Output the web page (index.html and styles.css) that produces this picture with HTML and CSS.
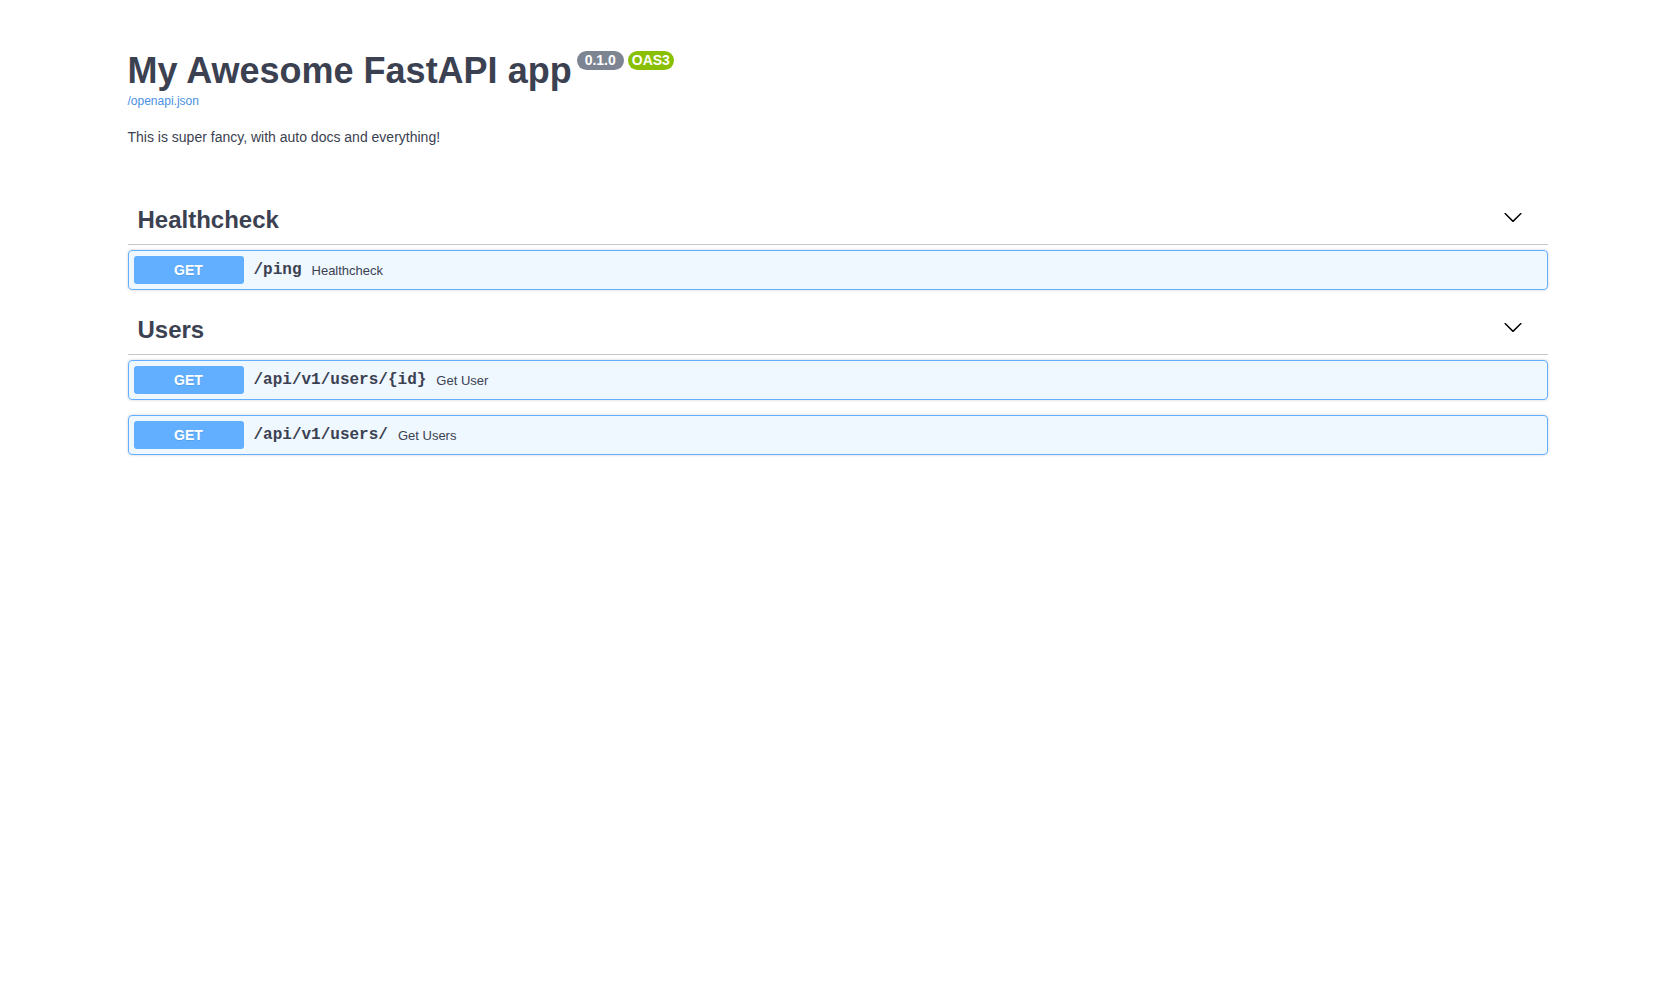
FILE: index.html
```html
<!DOCTYPE html>
<html lang="en">
<head>
<meta charset="utf-8">
<title>My Awesome FastAPI app - Swagger UI</title>
<link rel="stylesheet" href="styles.css">
</head>
<body>
<div class="swagger-ui">
  <div class="wrapper">
    <section class="info">
      <hgroup class="main">
        <h2 class="title">
          <span class="title-text">My Awesome FastAPI app</span>
          <span class="badge version">0.1.0</span>
          <span class="badge stamp">OAS3</span>
        </h2>
        <a class="link" href="#">/openapi.json</a>
      </hgroup>
      <div class="description">
        <p>This is super fancy, with auto docs and everything!</p>
      </div>
    </section>

    <section class="tag-section">
      <h3 class="opblock-tag">
        <span class="tag-name">Healthcheck</span>
        <button class="expand" type="button" aria-label="Collapse">
          <svg class="arrow" width="20" height="20" viewBox="0 0 20 20"><path d="M17.418 6.109c.272-.268.709-.268.979 0s.271.701 0 .969l-7.908 7.83c-.27.268-.707.268-.979 0l-7.908-7.83c-.27-.268-.27-.701 0-.969.271-.268.709-.268.979 0L10 13.25l7.418-7.141z"/></svg>
        </button>
      </h3>
      <div class="ops">
        <div class="opblock">
          <div class="summary">
            <span class="method">GET</span>
            <span class="path">/ping</span>
            <span class="desc">Healthcheck</span>
          </div>
        </div>
      </div>
    </section>

    <section class="tag-section">
      <h3 class="opblock-tag">
        <span class="tag-name">Users</span>
        <button class="expand" type="button" aria-label="Collapse">
          <svg class="arrow" width="20" height="20" viewBox="0 0 20 20"><path d="M17.418 6.109c.272-.268.709-.268.979 0s.271.701 0 .969l-7.908 7.83c-.27.268-.707.268-.979 0l-7.908-7.830c-.27-.268-.27-.701 0-.969.271-.268.709-.268.979 0L10 13.25l7.418-7.141z"/></svg>
        </button>
      </h3>
      <div class="ops">
        <div class="opblock">
          <div class="summary">
            <span class="method">GET</span>
            <span class="path">/api/v1/users/{id}</span>
            <span class="desc">Get User</span>
          </div>
        </div>
        <div class="opblock">
          <div class="summary">
            <span class="method">GET</span>
            <span class="path">/api/v1/users/</span>
            <span class="desc">Get Users</span>
          </div>
        </div>
      </div>
    </section>
  </div>
</div>
</body>
</html>
```
FILE: styles.css
```css
html, body {
  margin: 0;
  padding: 0;
  background: #fff;
}

.swagger-ui {
  font-family: "Liberation Sans", Arial, sans-serif;
  color: #3b4151;
}

.wrapper {
  max-width: 1460px;
  margin: 0 auto;
  padding: 0 20px;
  box-sizing: border-box;
}

.info {
  padding-top: 51px;
}

.main {
  margin: 0;
}

.title {
  display: flex;
  align-items: flex-start;
  margin: 0;
  font-size: 36px;
  line-height: 40px;
  font-weight: 700;
  color: #3b4151;
}

.badge {
  display: inline-block;
  margin-top: 0;
  margin-left: 4px;
  height: 19px;
  line-height: 19px;
  border-radius: 57px;
  font-size: 14px;
  font-weight: 700;
  color: #fff;
}

.badge.version {
  background: #7d8492;
  padding: 0 8px;
  margin-left: 5px;
}

.badge.stamp {
  background: #89bf04;
  padding: 0 4px;
}

.link {
  display: block;
  margin-top: 3px;
  font-size: 12px;
  line-height: 14px;
  color: #4990e2;
  text-decoration: none;
}

.description p {
  margin: 21px 0 0;
  font-size: 14px;
  line-height: 16px;
  color: #3b4151;
}

.tag-section {
  display: flex;
  flex-direction: column;
}

.info + .tag-section {
  margin-top: 52px;
}

.tag-section + .tag-section {
  margin-top: 2px;
}

.opblock-tag {
  display: flex;
  align-items: center;
  margin: 0 0 5px;
  padding: 9px 20px 11px 10px;
  font-size: 24px;
  line-height: 27px;
  font-weight: 700;
  color: #3b4151;
  border-bottom: 1px solid rgba(59, 65, 81, 0.3);
}

.tag-name {
  flex: 1;
}

.expand {
  display: flex;
  align-items: center;
  background: none;
  border: none;
  padding: 0 5px;
  margin: -5px 0 0;
  cursor: pointer;
}

.arrow {
  fill: #000;
  display: block;
}

.opblock {
  margin: 0 0 15px;
  border: 1px solid #61affe;
  border-radius: 4px;
  background: rgba(97, 175, 254, 0.1);
  box-shadow: 0 0 3px rgba(0, 0, 0, 0.19);
}

.summary {
  display: flex;
  align-items: center;
  padding: 5px;
}

.method {
  width: 110px;
  padding: 6px 0;
  line-height: 16px;
  text-align: center;
  font-size: 14px;
  font-weight: 700;
  color: #fff;
  background: #61affe;
  border-radius: 3px;
  text-shadow: 0 1px 0 rgba(0, 0, 0, 0.1);
}

.path {
  padding: 0 10px;
  font-family: "Liberation Mono", "Courier New", monospace;
  font-size: 16px;
  font-weight: 700;
  color: #3b4151;
}

.desc {
  font-size: 13px;
  color: #3b4151;
}
```
